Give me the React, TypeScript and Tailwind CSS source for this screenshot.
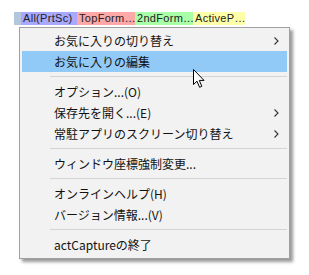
import React from 'react';

const FONT = { fontFamily: '"Noto Sans CJK JP", "Noto Sans", sans-serif' };

type Item =
  | { type: 'item'; label: string; sub?: boolean; active?: boolean }
  | { type: 'sep' };

const ITEMS: Item[] = [
  { type: 'item', label: 'お気に入りの切り替え', sub: true },
  { type: 'item', label: 'お気に入りの編集', active: true },
  { type: 'sep' },
  { type: 'item', label: 'オプション...(O)' },
  { type: 'item', label: '保存先を開く...(E)', sub: true },
  { type: 'item', label: '常駐アプリのスクリーン切り替え', sub: true },
  { type: 'sep' },
  { type: 'item', label: 'ウィンドウ座標強制変更...' },
  { type: 'sep' },
  { type: 'item', label: 'オンラインヘルプ(H)' },
  { type: 'item', label: 'バージョン情報...(V)' },
  { type: 'sep' },
  { type: 'item', label: 'actCaptureの終了' },
];

const TABS = [
  { label: 'All(PrtSc)', cls: 'bg-[#a8a8ff] w-[56px]' },
  { label: 'TopForm…', cls: 'bg-[#ffa8a8] w-[58px]' },
  { label: '2ndForm…', cls: 'bg-[#a8ffa8] w-[58px]' },
  { label: 'ActiveP…', cls: 'bg-[#ffffa8] w-[52px]' },
];

const Chevron = () => (
  <svg width="5" height="8" viewBox="0 0 5 8" className="ml-auto mr-[8px]">
    <path d="M0.5 0.5 L4 4 L0.5 7.5" fill="none" stroke="#333" strokeWidth="1.1" />
  </svg>
);

export default function App() {
  return (
    <div className="relative w-[309px] h-[275px] bg-white pl-[14px] pt-[12px] overflow-hidden" style={FONT}>
      {/* タブ */}
      <div className="flex h-[13px] text-[11px] leading-[13px] tracking-[0.3px] text-[#222] font-['Liberation_Sans',sans-serif]">
        <div className="w-[7px] bg-[#b4c6dc]" />
        {TABS.map(t => (
          <div key={t.label} className={`${t.cls} pl-[2px] whitespace-nowrap`}>
            {t.label}
          </div>
        ))}
      </div>

      {/* メニュー */}
      <div className="ml-[5px] mt-[2px] w-[271px] border border-[#a0a0a0] bg-[#f2f2f2] px-[2px] pt-[2px] pb-[3px] shadow-[3px_3px_3px_rgba(0,0,0,0.4)] text-[12px] text-[#111]">
        {ITEMS.map((it, i) =>
          it.type === 'sep' ? (
            <div key={i} className="h-[9px] flex items-center pl-[28px]">
              <div className="h-px w-full bg-[#d4d4d4]" />
            </div>
          ) : (
            <div
              key={i}
              className={`h-[21px] flex items-center pl-[32px] ${it.active ? 'bg-[#91c9f7]' : ''}`}
            >
              <span className="whitespace-nowrap">{it.label}</span>
              {it.sub && <Chevron />}
            </div>
          )
        )}
      </div>

      {/* カーソル */}
      <svg className="absolute left-[193px] top-[69px]" width="13" height="20" viewBox="0 0 13 20">
        <path
          d="M0.5 0.5 L0.5 15.5 L4 12.2 L6.6 18.3 L8.8 17.3 L6.3 11.4 L11 11.4 Z"
          fill="white"
          stroke="black"
          strokeWidth="1"
          strokeLinejoin="miter"
        />
      </svg>
    </div>
  );
}
